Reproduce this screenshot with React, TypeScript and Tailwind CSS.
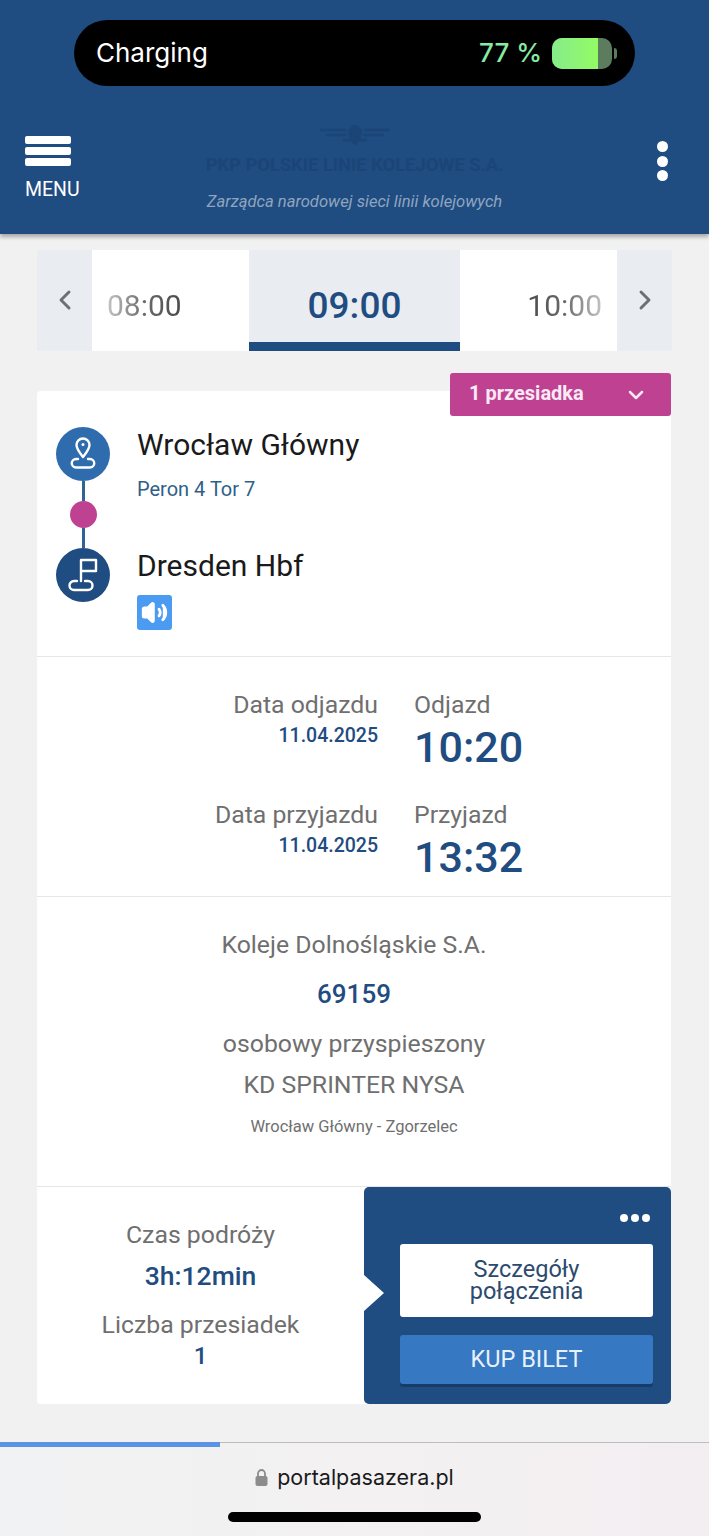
import { ChevronDown, ChevronLeft, ChevronRight, Volume2 } from "lucide-react";

function PinIcon() {
  return (
    <svg width="30" height="38" viewBox="0 0 30 38" fill="none" stroke="white" strokeWidth="2.4" strokeLinejoin="round" strokeLinecap="round">
      <path d="M15 22c-3.500-4.500-6.500-8-6.500-12a6.500 6.500 0 0 1 13 0c0 4-3 7.500-6.500 12z" />
      <circle cx="15" cy="9.500" r="1.500" fill="white" stroke="none" />
      <path d="M10 24H8a4 4 0 0 0 0 8.500h14a4 4 0 0 0 0-8.500h-2" />
    </svg>
  );
}

function FlagIcon() {
  return (
    <svg width="32" height="36" viewBox="0 0 32 36" fill="none" stroke="white" strokeWidth="2.400" strokeLinejoin="round" strokeLinecap="round">
      <path d="M14 24V3h15v11H14" />
      <path d="M10 24H7a4 4 0 0 0 0 9h14a4 4 0 0 0 0-9h-3" />
    </svg>
  );
}

function TimeRow({ dateLabel, date, label, time }: { dateLabel: string; date: string; label: string; time: string }) {
  return (
    <div className="flex h-[110px]">
      <div className="w-[341px] text-right">
        <div className="text-[24.800px] leading-[32px] text-[#6f6f6f]">{dateLabel}</div>
        <div className="mt-[3px] text-[19.500px] leading-[24px] font-medium text-[#1f4c81]">{date}</div>
      </div>
      <div className="ml-[36px]">
        <div className="text-[24.800px] leading-[32px] text-[#6f6f6f]">{label}</div>
        <div className="mt-[1px] text-[43px] leading-[50px] font-medium text-[#1f4c81]">{time}</div>
      </div>
    </div>
  );
}

export default function App() {
  return (
    <div className="flex h-[1536px] w-[709px] flex-col overflow-hidden bg-[#f1f1f1] font-['Roboto',sans-serif]">
      {/* Header */}
      <header className="h-[234px] shrink-0 bg-[#1f4c81] pt-[20px] shadow-[0_3px_4px_rgba(0,0,0,0.3)]">
        <div className="mx-[74px] flex h-[66px] items-center rounded-[33px] bg-black pr-[18px] pl-[22px] font-['Inter',sans-serif]">
          <span className="text-[26px] leading-none font-normal text-white">Charging</span>
          <span className="ml-auto text-[26px] leading-none font-medium text-[#86eba4]">77 %</span>
          <div className="ml-[10px] flex h-[31px] w-[60px] overflow-hidden rounded-[10px] bg-[#5c7d5d]">
            <div className="w-[46px] bg-linear-to-r from-[#86ec8a] to-[#93fb62]" />
          </div>
          <div className="ml-[2px] h-[11px] w-[3px] rounded-r-full bg-[#5c7d5d]" />
        </div>
        <div className="mt-[34px] flex">
          <div className="ml-[25px] w-[60px] pt-[16px]">
            <div className="flex w-[46px] flex-col gap-[3px]">
              <div className="h-[8px] rounded-[2px] bg-white" />
              <div className="h-[8px] rounded-[2px] bg-white" />
              <div className="h-[8px] rounded-[2px] bg-white" />
            </div>
            <div className="mt-[11px] text-[19.500px] leading-[26px] text-white">MENU</div>
          </div>
          <div className="flex flex-1 flex-col items-center">
            <svg width="76" height="20" viewBox="0 0 76 20" fill="none" stroke="#1b4577" strokeWidth="2.500" className="mt-[5px] mb-[1px]">
              <path d="M3 5h26M9 10h21M46 10h21M47 5h26" />
              <path d="M38 0l6 6-2 8-4 5-4-5-2-8z" fill="#1b4577" />
              <path d="M26 15h24" />
            </svg>
            <div className="mt-[7px] text-[18.500px] leading-[24px] font-bold tracking-[-0.100px] whitespace-nowrap text-[#1b4577]">
              PKP POLSKIE LINIE KOLEJOWE S.A.
            </div>
            <div className="mt-[15px] text-[16.600px] leading-[20px] text-[#8fa5bf] italic">
              Zarządca narodowej sieci linii kolejowych
            </div>
          </div>
          <div className="mr-[41px] ml-[33px] flex w-[11px] flex-col gap-[3.500px] pt-[21px]">
            <div className="h-[11px] w-[11px] rounded-full bg-white" />
            <div className="h-[11px] w-[11px] rounded-full bg-white" />
            <div className="h-[11px] w-[11px] rounded-full bg-white" />
          </div>
        </div>
      </header>

      {/* Hour tabs */}
      <div className="mx-[37px] mt-[16px] flex h-[101px] w-[635px] shrink-0 bg-[#e9ecf1]">
        <div className="flex w-[55px] justify-center pt-[34px]">
          <ChevronLeft size={32} strokeWidth={2.200} className="text-[#6b7076]" />
        </div>
        <div className="flex w-[157px] items-center bg-white pt-[10px] pl-[15px]">
          <span className="bg-linear-to-r from-[#c4c4c4] via-[#6a6a6a] to-[#4a4a4a] bg-clip-text text-[30px] text-transparent">08:00</span>
        </div>
        <div className="flex w-[211px] items-center justify-center border-b-[9px] border-[#1f4c81] pt-[19px] text-[37px] font-medium text-[#1f4c81]">
          09:00
        </div>
        <div className="flex w-[157px] items-center justify-end bg-white pt-[10px] pr-[15px]">
          <span className="bg-linear-to-r from-[#4a4a4a] via-[#6a6a6a] to-[#c4c4c4] bg-clip-text text-[30px] text-transparent">10:00</span>
        </div>
        <div className="flex w-[55px] justify-center pt-[34px]">
          <ChevronRight size={32} strokeWidth={2.200} className="text-[#6b7076]" />
        </div>
      </div>

      {/* Connection card */}
      <div className="relative mt-[40px] ml-[37px] w-[634px] shrink-0 rounded-[4px] bg-white">
        <div className="absolute top-[-18px] right-0 flex h-[43px] w-[221px] items-center rounded-[3px] bg-[#bf4192] pr-[23px] pb-[4px] pl-[19px] text-[20px] font-bold text-[#fbeaf5]">
          1 przesiadka
          <ChevronDown size={24} strokeWidth={2.500} className="mt-[4px] ml-auto" />
        </div>

        {/* Route */}
        <div className="flex h-[266px] border-b border-[#e6e6e6] pt-[36px] pl-[19px]">
          <div className="flex w-[54px] flex-col items-center">
            <div className="flex h-[54px] w-[54px] items-center justify-center rounded-full bg-[#2f6cae]">
              <PinIcon />
            </div>
            <div className="h-[20px] w-[3px] bg-[#2f6595]" />
            <div className="h-[27px] w-[27px] rounded-full bg-[#bf4192]" />
            <div className="h-[20px] w-[3px] bg-[#2f6595]" />
            <div className="flex h-[54px] w-[54px] items-center justify-center rounded-full bg-[#1f4c81]">
              <FlagIcon />
            </div>
          </div>
          <div className="ml-[27px]">
            <div className="text-[30px] leading-[36px] text-[#1a1a1a]">Wrocław Główny</div>
            <div className="mt-[14px] text-[20px] leading-[24px] text-[#2f5f88]">Peron 4 Tor 7</div>
            <div className="mt-[47px] text-[30px] leading-[36px] text-[#1a1a1a]">Dresden Hbf</div>
            <div className="mt-[11px] flex h-[35px] w-[35px] items-center justify-center rounded-[3px] bg-[#4b9bf3]">
              <Volume2 size={27} fill="white" strokeWidth={2.500} className="text-white" />
            </div>
          </div>
        </div>

        {/* Times */}
        <div className="h-[240px] border-b border-[#e6e6e6] pt-[32px]">
          <TimeRow dateLabel="Data odjazdu" date="11.04.2025" label="Odjazd" time="10:20" />
          <TimeRow dateLabel="Data przyjazdu" date="11.04.2025" label="Przyjazd" time="13:32" />
        </div>

        {/* Operator */}
        <div className="flex h-[290px] flex-col items-center border-b border-[#e6e6e6] pt-[32px]">
          <div className="text-[24.800px] leading-[32px] text-[#6f6f6f]">Koleje Dolnośląskie S.A.</div>
          <div className="mt-[17px] text-[26px] leading-[32px] font-medium text-[#1f4c81]">69159</div>
          <div className="mt-[18px] text-[24.800px] leading-[32px] text-[#6f6f6f]">osobowy przyspieszony</div>
          <div className="mt-[9px] text-[24.800px] leading-[32px] text-[#6f6f6f]">KD SPRINTER NYSA</div>
          <div className="mt-[15px] text-[16.500px] leading-[22px] text-[#6f6f6f]">Wrocław Główny - Zgorzelec</div>
        </div>

        {/* Summary */}
        <div className="flex h-[217px]">
          <div className="flex w-[327px] flex-col items-center pt-[32px]">
            <div className="text-[24.800px] leading-[32px] text-[#6f6f6f]">Czas podróży</div>
            <div className="mt-[9px] text-[26.500px] leading-[32px] font-medium text-[#1f4c81]">3h:12min</div>
            <div className="mt-[17px] text-[24.800px] leading-[32px] text-[#6f6f6f]">Liczba przesiadek</div>
            <div className="text-[24px] leading-[30px] font-medium text-[#1f4c81]">1</div>
          </div>
          <div className="relative flex-1 rounded-[5px] bg-[#1f4c81] pr-[18px] pl-[36px]">
            <div className="absolute top-[88px] left-0 h-0 w-0 border-y-[18px] border-l-[20px] border-y-transparent border-l-white" />
            <div className="flex justify-end gap-[3px] pt-[27px] pr-[3px]">
              <div className="h-[8px] w-[8px] rounded-full bg-white" />
              <div className="h-[8px] w-[8px] rounded-full bg-white" />
              <div className="h-[8px] w-[8px] rounded-full bg-white" />
            </div>
            <div className="mt-[22px] flex h-[73px] items-center justify-center rounded-[3px] bg-white pb-[2px] text-center text-[23.500px] leading-[22px] text-[#2c4a6e]">
              Szczegóły
              <br />
              połączenia
            </div>
            <div className="mt-[18px] flex h-[49px] items-center justify-center rounded-[3px] bg-[#3678c2] text-[23.500px] text-[#e8f1fb] shadow-[0_3px_0_#173c68]">
              KUP BILET
            </div>
          </div>
        </div>
      </div>

      {/* Browser bar */}
      <div className="mt-[38px] flex-1 border-t border-[#bdbdbd] bg-linear-to-r from-[#f1f2f3] via-[#f3f1f2] to-[#f3eef1]">
        <div className="mt-[-1px] h-[5px] w-[220px] bg-[#5b93e4]" />
        <div className="mt-[15px] flex items-center justify-center gap-[9px]">
          <svg width="13" height="17" viewBox="0 0 13 17" fill="none">
            <path d="M3 8V4.500a3.500 3.500 0 0 1 7 0V8" stroke="#8c8c8c" strokeWidth="1.800" />
            <rect x="0.500" y="7" width="12" height="10" rx="2" fill="#8c8c8c" />
          </svg>
          <span className="font-['Inter',sans-serif] text-[21.500px] leading-[30px] text-[#1a1a1a]">portalpasazera.pl</span>
        </div>
        <div className="mx-auto mt-[20px] h-[10px] w-[253px] rounded-full bg-black" />
      </div>
    </div>
  );
}
